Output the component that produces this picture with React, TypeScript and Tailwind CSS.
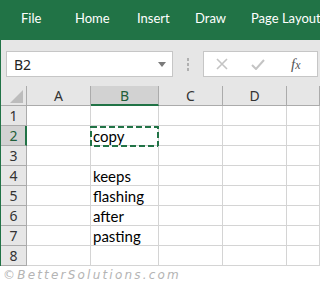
import React from 'react';

const tabs = [
    { label: 'File', w: 'w-[54px]' },
    { label: 'Home', w: 'w-[62px]' },
    { label: 'Insert', w: 'w-[58px]' },
    { label: 'Draw', w: 'w-[56px]' },
    { label: 'Page Layout', w: 'w-[68px]' },
];

const cols = ['A', 'B', 'C', 'D', ''];

const cellText: Record<number, string> = {
    2: 'copy',
    4: 'keeps',
    5: 'flashing',
    6: 'after',
    7: 'pasting',
};

const Ribbon = () => (
    <div className="flex h-[40px] items-center bg-[#217346] pl-[20px] pb-[2px] text-[13px] text-white [font-family:Lato,sans-serif]">
        {tabs.map((t) => (
            <span key={t.label} className={`${t.w} shrink-0 whitespace-nowrap`}>
                {t.label}
            </span>
        ))}
    </div>
);

const FormulaBar = () => (
    <div className="flex h-[46px] items-start bg-[#e6e6e6] pt-[11px] pl-[5px] [font-family:'Noto_Sans',sans-serif]">
        <div className="flex h-[26px] w-[167px] items-center justify-between border border-[#c6c6c6] bg-white pl-[7px] pr-[6px]">
            <span className="text-[14px] text-[#222]">B2</span>
            <svg width="8" height="5" viewBox="0 0 8 5">
                <path d="M0 0H8L4 5Z" fill="#7a7a7a" />
            </svg>
        </div>
        <div className="flex w-[30px] flex-col items-center gap-[2px] pt-[7px]">
            <span className="h-[3px] w-[2px] bg-[#b0b0b0]" />
            <span className="h-[3px] w-[2px] bg-[#b0b0b0]" />
            <span className="h-[3px] w-[2px] bg-[#b0b0b0]" />
        </div>
        <div className="flex h-[26px] w-[115px] items-center border border-[#c6c6c6] bg-white pl-[12px]">
            <svg width="12" height="12" viewBox="0 0 12 12">
                <path d="M1 1L11 11M11 1L1 11" stroke="#c4c4c4" strokeWidth="1.6" />
            </svg>
            <svg className="ml-[23px]" width="14" height="11" viewBox="0 0 14 11">
                <path d="M1 6L5 10L13 1" stroke="#c4c4c4" strokeWidth="2" fill="none" />
            </svg>
            <span className="ml-[26px] text-[15px] italic text-[#555] [font-family:'Liberation_Serif',serif]">
                f<span className="text-[12px]">x</span>
            </span>
        </div>
    </div>
);

const Sheet = () => (
    <div className="grid grid-cols-[26px_64px_68px_64px_64px_1fr] text-[14px] [font-family:'Noto_Sans',sans-serif]">
        <div className="relative h-[20px] border-r border-b border-[#ababab] bg-[#e6e6e6]">
            <svg className="absolute right-[3px] bottom-[2px]" width="13" height="13" viewBox="0 0 13 13">
                <path d="M13 0V13H0Z" fill="#bcbcbc" />
            </svg>
        </div>
        {cols.map((c) => (
            <div
                key={c || 'E'}
                className={
                    c === 'B'
                        ? 'flex h-[20px] items-center justify-center border-r border-b-2 border-r-[#ababab] border-b-[#217346] bg-[#d2d2d2] text-[#1f5f3a]'
                        : 'flex h-[20px] items-center justify-center border-r border-b border-[#ababab] bg-[#e6e6e6] text-[#333]'
                }
            >
                {c}
            </div>
        ))}
        {[1, 2, 3, 4, 5, 6, 7, 8].map((r) => (
            <React.Fragment key={r}>
                <div
                    className={
                        r === 2
                            ? 'flex h-[20px] items-center justify-center border-r-2 border-b border-r-[#217346] border-b-[#ababab] bg-[#d2d2d2] pl-[1px] text-[#1f5f3a]'
                            : 'flex h-[20px] items-center justify-center border-r border-b border-[#ababab] bg-[#e6e6e6] text-[#333]'
                    }
                >
                    {r}
                </div>
                {cols.map((c) => (
                    <div
                        key={c || 'E'}
                        className="relative flex h-[20px] items-end border-r border-b border-[#d4d4d4] pl-[2px] text-[15px] leading-[18px] text-black [font-family:Lato,sans-serif]"
                    >
                        {c === 'B' && cellText[r]}
                        {c === 'B' && r === 2 && (
                            <svg className="absolute top-0 -left-[1px]" width="69" height="21" viewBox="0 0 69 21">
                                <rect x="1" y="1" width="67" height="19" fill="none" stroke="#217346" strokeWidth="2" strokeDasharray="6 3" />
                            </svg>
                        )}
                    </div>
                ))}
            </React.Fragment>
        ))}
    </div>
);

export default function App() {
    return (
        <div className="h-[285px] w-[320px] overflow-hidden bg-white">
            <div className="border-l border-[#217346]">
                <Ribbon />
                <FormulaBar />
                <Sheet />
            </div>
            <div className="pl-[3px] pt-[2px] text-[12px] italic leading-[14px] tracking-[2.2px] text-[#b4b4b4] [font-family:'DejaVu_Sans',sans-serif]">
                ©BetterSolutions.com
            </div>
        </div>
    );
}
